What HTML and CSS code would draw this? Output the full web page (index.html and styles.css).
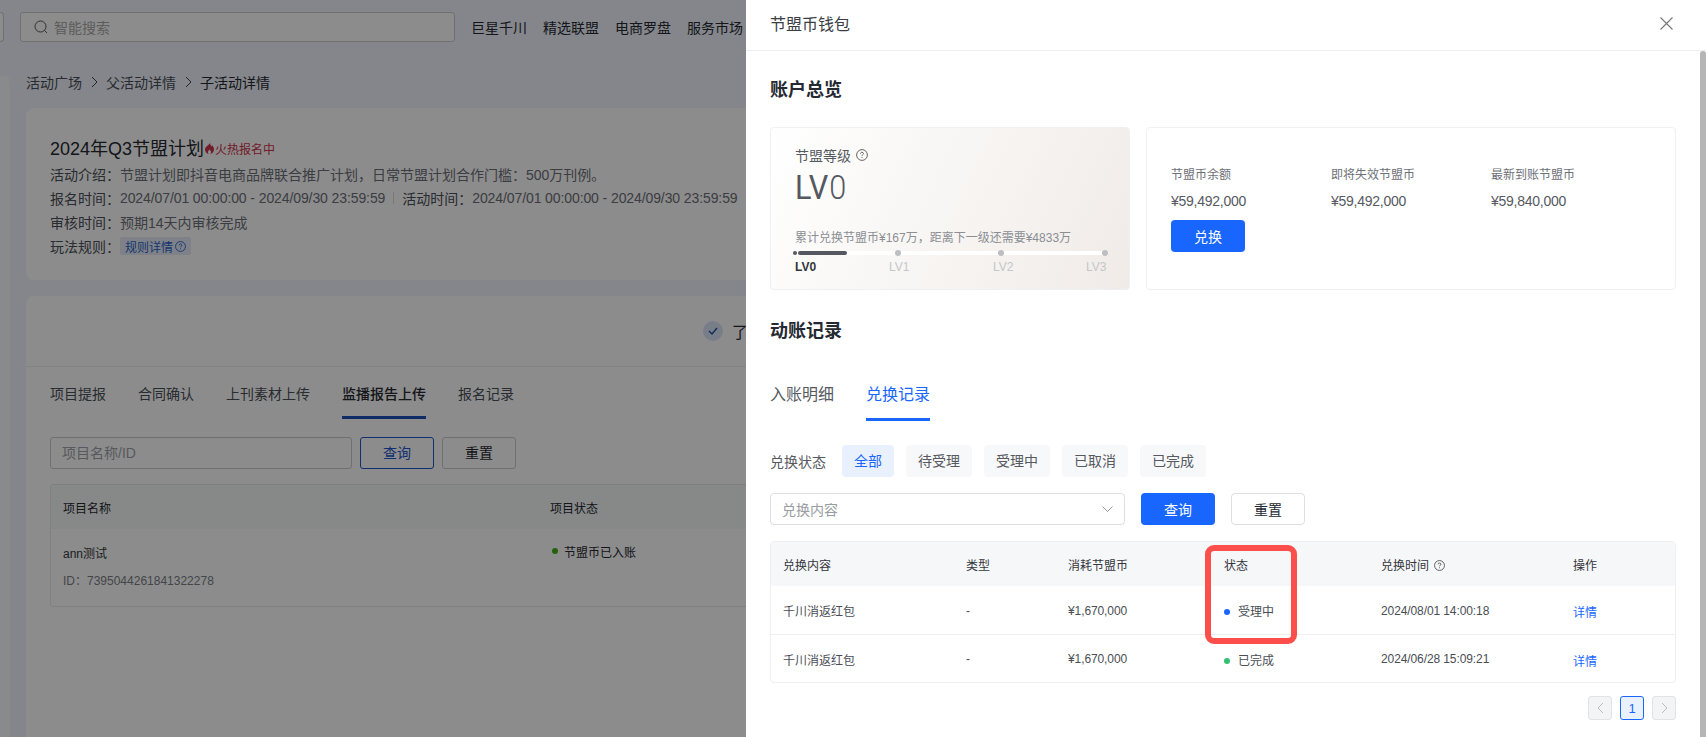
FILE: index.html
```html
<!DOCTYPE html>
<html lang="en">

<head>
    <meta charset="UTF-8">
    <title>节盟币钱包</title>
    <link rel="stylesheet" href="styles.css">
</head>

<body>

    <div class="page">
        <div class="topbar">
            <div class="top-stub"></div>
            <div class="top-search">
                <svg class="top-search-icon" width="14" height="14" viewBox="0 0 14 14" fill="none" stroke="#555" stroke-width="1">
                    <circle cx="6.5" cy="6.5" r="5.5"></circle>
                    <path d="M10.5 10.5L13 13"></path>
                </svg>
                <span>智能搜索</span>
            </div>
            <div class="top-nav">
                <span>巨星千川</span>
                <span>精选联盟</span>
                <span>电商罗盘</span>
                <span>服务市场</span>
            </div>
        </div>

        <div class="page-body">
            <div class="side-stub"></div>
            <div class="page-main">
                <div class="crumbs">
                    <span>活动广场</span>
                    <svg class="crumb-arrow" width="7" height="12" viewBox="0 0 7 12" fill="none" stroke="#444" stroke-width="1"><path d="M1 1l5 5-5 5"></path></svg>
                    <span>父活动详情</span>
                    <svg class="crumb-arrow" width="7" height="12" viewBox="0 0 7 12" fill="none" stroke="#444" stroke-width="1"><path d="M1 1l5 5-5 5"></path></svg>
                    <span class="crumb-current">子活动详情</span>
                </div>

                <div class="info-card">
                    <div class="info-title">
                        <span>2024年Q3节盟计划</span>
                        <span class="hot-tag">
                            <svg class="hot-flame" width="9" height="11" viewBox="0 0 9 11" fill="#d0334c" fill-rule="evenodd"><path d="M5 0C5.2 1.8 6.2 2.4 6.6 3.4 7 3 7.1 2.6 7.1 2.2 8.2 3.4 9 4.8 9 6.5 9 9.2 7 11 4.5 11S0 9.2 0 6.5C0 4 3.4 2.6 5 0ZM4.5 6.4C3.6 7.4 2.9 8.2 2.9 9.2 2.9 10.2 3.6 11 4.5 11S6.1 10.2 6.1 9.2C6.1 8.2 5.4 7.4 4.5 6.4Z"></path></svg>火热报名中
                        </span>
                    </div>
                    <div class="info-line"><span class="info-key">活动介绍：</span><span class="info-val">节盟计划即抖音电商品牌联合推广计划，日常节盟计划合作门槛：500万刊例。</span></div>
                    <div class="info-line">
                        <span class="info-key">报名时间：</span><span class="info-val info-date">2024/07/01 00:00:00 - 2024/09/30 23:59:59</span>
                        <span class="info-split"></span>
                        <span class="info-key">活动时间：</span><span class="info-val info-date">2024/07/01 00:00:00 - 2024/09/30 23:59:59</span>
                    </div>
                    <div class="info-line"><span class="info-key">审核时间：</span><span class="info-val">预期14天内审核完成</span></div>
                    <div class="info-line">
                        <span class="info-key">玩法规则：</span>
                        <span class="rule-tag">规则详情
                            <svg width="11" height="11" viewBox="0 0 12 12" fill="none" stroke="#2a62c8" stroke-width="1"><circle cx="6" cy="6" r="5.4"></circle><path d="M4.5 4.7C4.5 3.8 5.2 3.3 6 3.3S7.5 3.8 7.5 4.6C7.5 5.6 6 5.7 6 6.9M6 8v1"></path></svg>
                        </span>
                    </div>
                </div>

                <div class="task-card">
                    <div class="step-row">
                        <span class="step-check">
                            <svg width="10" height="8" viewBox="0 0 10 8" fill="none" stroke="#1d4ea8" stroke-width="1.4"><path d="M1 4l3 3 5-6"></path></svg>
                        </span>
                        <span>了解</span>
                    </div>
                    <div class="task-inner">
                        <div class="page-tabs">
                            <span>项目提报</span>
                            <span>合同确认</span>
                            <span>上刊素材上传</span>
                            <span class="page-tab-active">监播报告上传</span>
                            <span>报名记录</span>
                        </div>
                        <div class="page-filter">
                            <div class="page-input">项目名称/ID</div>
                            <div class="page-btn page-btn-query">查询</div>
                            <div class="page-btn">重置</div>
                        </div>
                        <div class="page-table">
                            <div class="page-thead">
                                <span class="page-col">项目名称</span>
                                <span>项目状态</span>
                            </div>
                            <div class="page-trow">
                                <div class="page-col">
                                    <div class="page-name">ann测试</div>
                                    <div class="page-id">ID：7395044261841322278</div>
                                </div>
                                <div class="page-state"><i class="page-dot"></i>节盟币已入账</div>
                            </div>
                        </div>
                    </div>
                </div>
            </div>
        </div>
    </div>

    <div class="mask"></div>

    <div class="drawer">
        <div class="drawer-head">
            <span>节盟币钱包</span>
            <svg width="13" height="13" viewBox="0 0 13 13" fill="none" stroke="#777" stroke-width="1.1"><path d="M.5.5l12 12M12.5.5l-12 12"></path></svg>
        </div>
        <div class="drawer-main">
            <div class="drawer-body">
                <h3 class="section-title">账户总览</h3>
                <div class="overview">
                    <div class="level-card">
                        <div class="level-label">节盟等级
                            <svg width="12" height="12" viewBox="0 0 12 12" fill="none" stroke="#666" stroke-width="1"><circle cx="6" cy="6" r="5.4"></circle><path d="M4.5 4.7C4.5 3.8 5.2 3.3 6 3.3S7.5 3.8 7.5 4.6C7.5 5.6 6 5.7 6 6.9M6 8v1"></path></svg>
                        </div>
                        <div class="level-value">LV<span>0</span></div>
                        <div class="level-hint">累计兑换节盟币¥167万，距离下一级还需要¥4833万</div>
                        <div class="level-track">
                            <div class="level-fill"></div>
                            <i class="level-dot level-dot-first"></i>
                            <i class="level-dot"></i>
                            <i class="level-dot"></i>
                            <i class="level-dot"></i>
                        </div>
                        <div class="level-names">
                            <span class="level-current">LV0</span>
                            <span>LV1</span>
                            <span>LV2</span>
                            <span>LV3</span>
                        </div>
                    </div>
                    <div class="balance-card">
                        <div class="balance-row">
                            <div class="balance-item">
                                <div class="balance-label">节盟币余额</div>
                                <div class="balance-value">¥59,492,000</div>
                            </div>
                            <div class="balance-item">
                                <div class="balance-label">即将失效节盟币</div>
                                <div class="balance-value">¥59,492,000</div>
                            </div>
                            <div class="balance-item">
                                <div class="balance-label">最新到账节盟币</div>
                                <div class="balance-value">¥59,840,000</div>
                            </div>
                        </div>
                        <button type="button" class="btn btn-primary">兑换</button>
                    </div>
                </div>

                <h3 class="section-title section-title-second">动账记录</h3>
                <div class="tabs">
                    <span class="tab">入账明细</span>
                    <span class="tab tab-active">兑换记录</span>
                </div>

                <div class="status-filter">
                    <span class="status-label">兑换状态</span>
                    <span class="chip chip-active">全部</span>
                    <span class="chip">待受理</span>
                    <span class="chip">受理中</span>
                    <span class="chip">已取消</span>
                    <span class="chip">已完成</span>
                </div>

                <div class="search-row">
                    <div class="select">
                        <span>兑换内容</span>
                        <svg width="11" height="6" viewBox="0 0 11 6" fill="none" stroke="#999" stroke-width="1"><path d="M.5.5l5 5 5-5"></path></svg>
                    </div>
                    <button type="button" class="btn btn-primary">查询</button>
                    <button type="button" class="btn btn-default">重置</button>
                </div>

                <div class="table-wrap">
                    <table class="record-table">
                        <colgroup>
                            <col class="col-content">
                            <col class="col-type">
                            <col class="col-cost">
                            <col class="col-state">
                            <col class="col-time">
                            <col>
                        </colgroup>
                        <thead>
                            <tr>
                                <th>兑换内容</th>
                                <th>类型</th>
                                <th>消耗节盟币</th>
                                <th>状态</th>
                                <th>兑换时间
                                    <svg class="th-help" width="11" height="11" viewBox="0 0 12 12" fill="none" stroke="#555" stroke-width="1"><circle cx="6" cy="6" r="5.4"></circle><path d="M4.5 4.7C4.5 3.8 5.2 3.3 6 3.3S7.5 3.8 7.5 4.6C7.5 5.6 6 5.7 6 6.9M6 8v1"></path></svg>
                                </th>
                                <th>操作</th>
                            </tr>
                        </thead>
                        <tbody>
                            <tr>
                                <td>千川消返红包</td>
                                <td>-</td>
                                <td class="td-num">¥1,670,000</td>
                                <td><i class="dot dot-blue"></i>受理中</td>
                                <td class="td-num">2024/08/01 14:00:18</td>
                                <td><a class="link">详情</a></td>
                            </tr>
                            <tr>
                                <td>千川消返红包</td>
                                <td>-</td>
                                <td class="td-num">¥1,670,000</td>
                                <td><i class="dot dot-green"></i>已完成</td>
                                <td class="td-num">2024/06/28 15:09:21</td>
                                <td><a class="link">详情</a></td>
                            </tr>
                        </tbody>
                    </table>
                    <div class="red-mark"></div>
                </div>

                <div class="pager">
                    <span class="pager-btn pager-off">
                        <svg width="7" height="12" viewBox="0 0 7 12" fill="none" stroke="#bbb" stroke-width="1"><path d="M6 1L1 6l5 5"></path></svg>
                    </span>
                    <span class="pager-btn pager-on">1</span>
                    <span class="pager-btn pager-off">
                        <svg width="7" height="12" viewBox="0 0 7 12" fill="none" stroke="#bbb" stroke-width="1"><path d="M1 1l5 5-5 5"></path></svg>
                    </span>
                </div>
            </div>
            <div class="scrollbar"></div>
        </div>
    </div>

</body>

</html>
```

FILE: styles.css
```css
* {
    box-sizing: border-box;
}

body {
    font-family: "Liberation Sans", "Noto Sans CJK SC", sans-serif;
    font-size: 14px;
    color: #252931;
    background-color: #f1f5fd;
    margin: 0;
    height: 737px;
    overflow: hidden;
    position: relative;
}

/* page behind the drawer */
.page {
    height: 737px;
}

.topbar {
    display: flex;
    align-items: center;
    height: 56px;
    padding-bottom: 2px;
}

.top-stub {
    width: 4px;
    height: 30px;
    border: 1px solid #ccc;
    border-left: none;
    border-radius: 0 4px 4px 0;
    background-color: #fff;
}

.top-search {
    display: flex;
    align-items: center;
    gap: 6px;
    width: 435px;
    height: 30px;
    margin-left: 16px;
    padding-left: 13px;
    background-color: #fff;
    border: 1px solid #ccc;
    border-radius: 3px;
    color: #aaa;
}

.top-nav {
    display: flex;
    gap: 16px;
    margin-left: 16px;
    white-space: nowrap;
}

.page-body {
    display: flex;
    padding-top: 20px;
}

.side-stub {
    width: 10px;
    height: 661px;
    background-color: #fafbfd;
    border-radius: 0 6px 0 0;
}

.page-main {
    flex: 1;
    padding: 0 16px;
}

.crumbs {
    display: flex;
    align-items: center;
    height: 12px;
    color: #4a4f58;
}

.crumb-arrow {
    margin: 0 8.5px;
}

.crumb-current {
    color: #252931;
}

.info-card {
    height: 172px;
    margin-top: 20px;
    padding: 26px 24px 0;
    background-color: #fff;
    border-radius: 8px;
}

.info-title {
    display: flex;
    align-items: center;
    height: 26px;
    margin-bottom: 2px;
    font-size: 18px;
    white-space: nowrap;
}

.hot-tag {
    display: flex;
    align-items: center;
    font-size: 12px;
    color: #d0334c;
    padding-top: 2px;
}

.hot-flame {
    margin: 0 1px 0 1px;
}

.info-line {
    display: flex;
    align-items: center;
    height: 24px;
    white-space: nowrap;
}

.info-key {
    width: 70px;
    color: #4a4f58;
}

.info-val {
    color: #6d7078;
}

.info-date {
    letter-spacing: -0.1px;
}

.info-split {
    width: 1px;
    height: 12px;
    margin: 0 8px;
    background-color: #ddd;
}

.rule-tag {
    display: flex;
    align-items: center;
    gap: 2px;
    height: 18px;
    padding: 0 5px;
    font-size: 12px;
    color: #2a62c8;
    background-color: #e6ecf8;
    border-radius: 2px;
}

.task-card {
    height: 460px;
    margin-top: 16px;
    background-color: #fff;
    border-radius: 8px 8px 0 0;
}

.step-row {
    display: flex;
    align-items: center;
    gap: 9px;
    height: 71px;
    padding: 0 0 0 677px;
    border-bottom: 1px solid #eceef1;
    white-space: nowrap;
    font-size: 16px;
}

.step-check {
    display: flex;
    align-items: center;
    justify-content: center;
    width: 20px;
    height: 20px;
    border-radius: 50%;
    background-color: #dbe6f8;
}

.task-inner {
    padding: 15px 24px 0;
}

.page-tabs {
    display: flex;
    gap: 32px;
    color: #4a4f58;
    white-space: nowrap;
}

.page-tabs span {
    height: 37px;
    line-height: 24px;
}

.page-tab-active {
    color: #252931;
    font-weight: 500;
    border-bottom: 3px solid #1d50c0;
}

.page-filter {
    display: flex;
    gap: 8px;
    margin-top: 18px;
}

.page-input {
    width: 302px;
    height: 32px;
    line-height: 30px;
    padding-left: 11px;
    color: #a0a3a8;
    background-color: #fff;
    border: 1px solid #ccc;
    border-radius: 3px;
}

.page-btn {
    width: 74px;
    height: 32px;
    line-height: 30px;
    text-align: center;
    border: 1px solid #ccc;
    border-radius: 3px;
}

.page-btn-query {
    color: #1d56cc;
    border-color: #1d56cc;
}

.page-table {
    margin-top: 15px;
    font-size: 12px;
    height: 123px;
    border: 1px solid #e8eaee;
    border-radius: 3px;
}

.page-thead {
    display: flex;
    align-items: center;
    height: 44px;
    background-color: #f6f8f8;
}

.page-col {
    width: 499px;
    padding-left: 12px;
}

.page-trow {
    display: flex;
}

.page-name {
    margin-top: 15px;
    color: #33363c;
}

.page-id {
    margin-top: 10px;
    color: #7b7f86;
}

.page-state {
    display: flex;
    align-items: center;
    gap: 6px;
    height: 16px;
    margin-top: 14px;
}

.page-dot {
    display: block;
    width: 6px;
    height: 6px;
    margin-left: 2px;
    border-radius: 50%;
    background-color: #45b010;
}

.mask {
    position: absolute;
    top: 0;
    left: 0;
    right: 0;
    bottom: 0;
    background-color: rgba(0, 0, 0, 0.45);
}

/* drawer */
.drawer {
    position: absolute;
    top: 0;
    right: 0;
    bottom: 0;
    width: 960px;
    display: flex;
    flex-direction: column;
    background-color: #fff;
}

.drawer-head {
    display: flex;
    align-items: center;
    justify-content: space-between;
    height: 51px;
    padding: 0 33px 4px 24px;
    font-size: 16px;
    color: #3a3d44;
    border-bottom: 1px solid #eceef1;
}

.drawer-main {
    flex: 1;
    display: flex;
    min-height: 0;
}

.drawer-body {
    flex: 1;
    padding: 26px 24px 0;
}

.scrollbar {
    width: 6px;
    background-color: #b5b5b5;
    border-radius: 3px 3px 0 0;
}

.section-title {
    margin: 0;
    font-size: 18px;
    line-height: 26px;
    font-weight: bold;
    color: #252931;
}

.section-title-second {
    margin-top: 28px;
}

.overview {
    display: flex;
    gap: 16px;
    margin-top: 24px;
}

.level-card {
    width: 360px;
    height: 163px;
    padding: 17px 21px 0 24px;
    border: 1px solid #eff0f2;
    border-radius: 4px;
    background: linear-gradient(115deg, #ffffff 0%, #f0ebe7 100%);
}

.level-label {
    display: flex;
    align-items: center;
    gap: 5px;
    height: 20px;
    color: #565960;
}

.level-value {
    height: 42px;
    margin-top: 1px;
    font-family: Roboto, "Liberation Sans", sans-serif;
    font-size: 34px;
    line-height: 42px;
    color: #55585f;
    transform: scaleX(0.9);
    transform-origin: left;
}

.level-value span {
    margin-left: 1px;
    font-weight: 300;
}

.level-hint {
    height: 18px;
    margin-top: 21px;
    font-size: 12px;
    line-height: 18px;
    color: #8b8e94;
    white-space: nowrap;
}

.level-track {
    position: relative;
    display: flex;
    align-items: center;
    justify-content: space-between;
    height: 4px;
    margin: 4px 0 0 -2px;
    background-color: #fff;
    border-radius: 2px;
}

.level-fill {
    position: absolute;
    left: 5px;
    top: 0;
    width: 49px;
    height: 4px;
    background-color: #55585f;
    border-radius: 2px;
}

.level-dot {
    display: block;
    width: 6px;
    height: 6px;
    border-radius: 50%;
    background-color: #bdbec2;
}

.level-dot-first {
    width: 4px;
    height: 4px;
    background-color: #55585f;
}

.level-names {
    display: grid;
    grid-template-columns: 94px 104px 93px auto;
    margin-top: 4px;
    font-size: 12px;
    line-height: 16px;
    color: #c4c6ca;
}

.level-current {
    font-weight: bold;
    color: #33363c;
}

.balance-card {
    flex: 1;
    height: 163px;
    padding: 36px 24px 0;
    border: 1px solid #eff0f2;
    border-radius: 4px;
}

.balance-row {
    display: flex;
}

.balance-item {
    width: 160px;
}

.balance-label {
    padding-top: 1px;
    font-size: 12px;
    line-height: 20px;
    color: #6d7078;
}

.balance-value {
    margin-top: 6px;
    line-height: 20px;
    color: #565960;
    letter-spacing: -0.25px;
}

.btn {
    display: block;
    width: 74px;
    height: 32px;
    padding: 0;
    font-family: inherit;
    font-size: 14px;
    border-radius: 4px;
}

.balance-card .btn {
    margin-top: 9px;
}

.btn-primary {
    color: #fff;
    background-color: #1966ff;
    border: none;
}

.btn-default {
    color: #252931;
    background-color: #fff;
    border: 1px solid #dcdee2;
}

.tabs {
    display: flex;
    gap: 32px;
    margin-top: 39px;
}

.tab {
    height: 38px;
    font-size: 16px;
    line-height: 24px;
    color: #565960;
}

.tab-active {
    color: #1966ff;
    border-bottom: 3px solid #1966ff;
}

.status-filter {
    display: flex;
    align-items: center;
    gap: 12px;
    margin-top: 24px;
}

.status-label {
    width: 60px;
    color: #565960;
}

.chip {
    height: 32px;
    padding: 0 12px;
    line-height: 32px;
    color: #565960;
    background-color: #f6f8fa;
    border-radius: 4px;
}

.chip-active {
    color: #1966ff;
    background-color: #e9f1fe;
}

.search-row {
    display: flex;
    gap: 16px;
    margin-top: 16px;
}

.select {
    display: flex;
    align-items: center;
    justify-content: space-between;
    width: 355px;
    height: 32px;
    padding: 0 11px;
    color: #999ca1;
    border: 1px solid #dcdee2;
    border-radius: 4px;
}

.table-wrap {
    position: relative;
    margin-top: 16px;
    border: 1px solid #eceef1;
    border-radius: 4px;
}

.record-table {
    width: 100%;
    table-layout: fixed;
    border-collapse: collapse;
    font-size: 12px;
}

.col-content {
    width: 183px;
}

.col-type {
    width: 102px;
}

.col-cost {
    width: 156px;
}

.col-state {
    width: 157px;
}

.col-time {
    width: 192px;
}

.record-table th {
    height: 44px;
    padding: 0 12px;
    text-align: left;
    font-weight: normal;
    color: #33363c;
    background-color: #f6f7f9;
}

.th-help {
    margin-left: 2px;
    vertical-align: -1px;
}

.record-table td {
    height: 48px;
    padding: 2px 12px 0;
    color: #4a4d54;
    border-bottom: 1px solid #eceef1;
}

.record-table tbody tr:last-child td {
    border-bottom: none;
}

.td-num {
    letter-spacing: -0.1px;
}

.dot {
    display: inline-block;
    width: 6px;
    height: 6px;
    margin-right: 8px;
    border-radius: 50%;
    vertical-align: 1px;
}

.dot-blue {
    background-color: #1966ff;
}

.dot-green {
    background-color: #32c173;
}

.link {
    display: inline-block;
    margin-top: 2px;
    color: #1966ff;
}

.red-mark {
    position: absolute;
    left: 434px;
    top: 3px;
    width: 92px;
    height: 99px;
    border: 6px solid #fc4f4b;
    border-radius: 9px;
}

.pager {
    display: flex;
    justify-content: flex-end;
    gap: 8px;
    margin-top: 13px;
}

.pager-btn {
    display: flex;
    align-items: center;
    justify-content: center;
    width: 24px;
    height: 24px;
    border-radius: 3px;
    font-size: 13px;
}

.pager-off {
    background-color: #f3f4f5;
    border: 1px solid #e2e3e5;
}

.pager-on {
    color: #1966ff;
    background-color: #e9f1fe;
    border: 1px solid #1966ff;
}
```
